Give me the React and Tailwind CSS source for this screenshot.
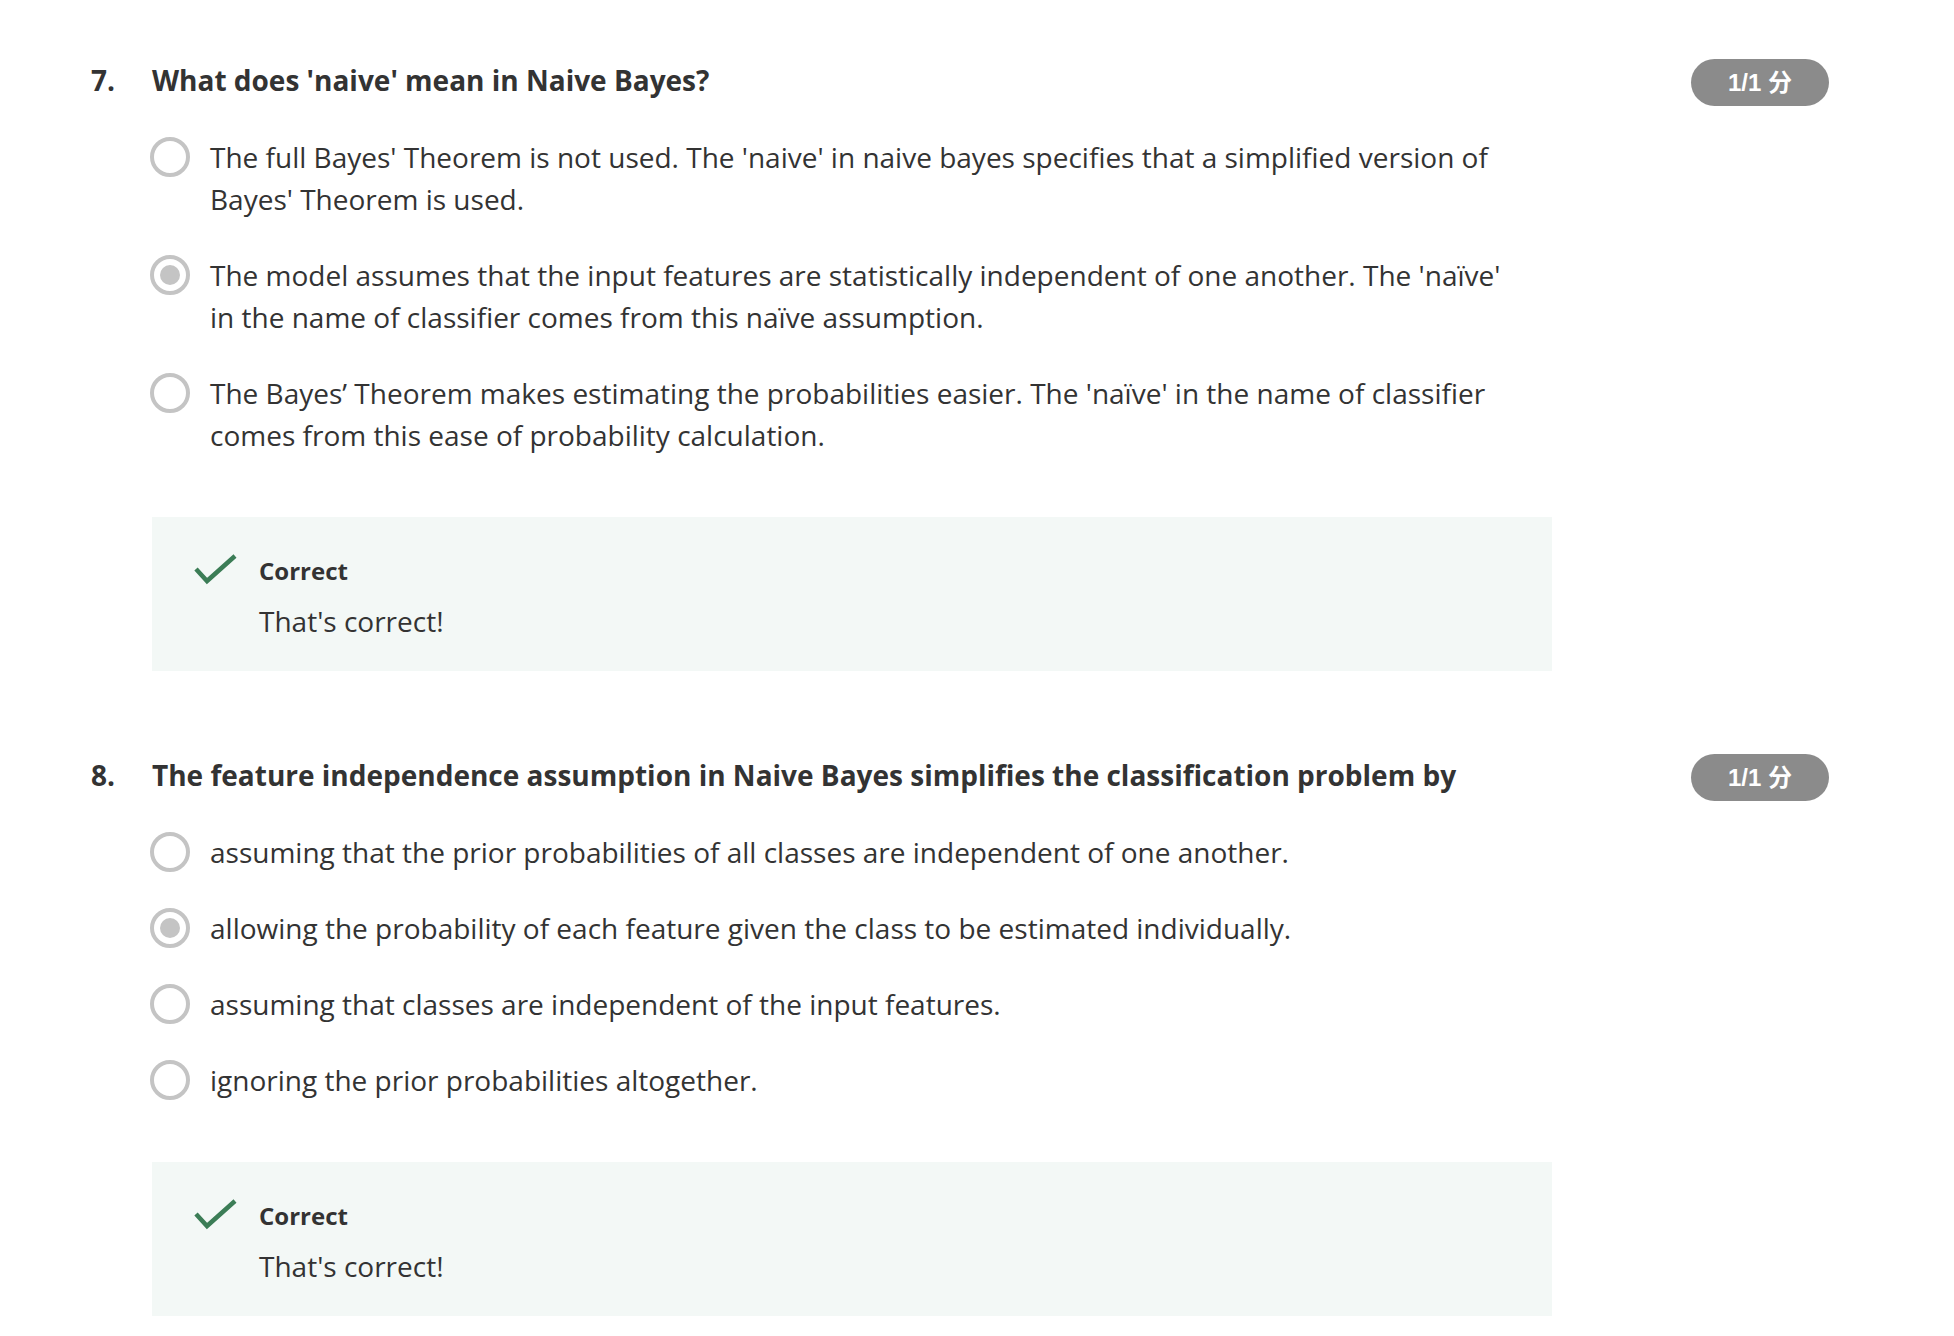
const questions = [
  {
    num: "7.",
    title: "What does 'naive' mean in Naive Bayes?",
    options: [
      "The full Bayes' Theorem is not used. The 'naive' in naive bayes specifies that a simplified version of Bayes' Theorem is used.",
      "The model assumes that the input features are statistically independent of one another. The 'naïve' in the name of classifier comes from this naïve assumption.",
      "The Bayes’ Theorem makes estimating the probabilities easier. The 'naïve' in the name of classifier comes from this ease of probability calculation.",
    ],
    selected: 1,
  },
  {
    num: "8.",
    title: "The feature independence assumption in Naive Bayes simplifies the classification problem by",
    options: [
      "assuming that the prior probabilities of all classes are independent of one another.",
      "allowing the probability of each feature given the class to be estimated individually.",
      "assuming that classes are independent of the input features.",
      "ignoring the prior probabilities altogether.",
    ],
    selected: 1,
  },
];

function Radio({ checked }) {
  return (
    <div className="w-[40px] h-[40px] shrink-0 rounded-full border-[4px] border-[#c4c4c4] flex items-center justify-center">
      {checked && <div className="w-[20px] h-[20px] rounded-full bg-[#c4c4c4]" />}
    </div>
  );
}

function CheckIcon() {
  return (
    <svg width="44" height="32" viewBox="0 0 44 32" fill="none">
      <path d="M2 15 L13 27 L41 2" stroke="#3b7d56" strokeWidth="4.5" />
    </svg>
  );
}

function Question({ q }) {
  return (
    <div className="flex">
      <div className="w-[61px] shrink-0 text-[28px] leading-[42px] font-bold text-[#333]">{q.num}</div>
      <div className="flex-1">
        <div className="flex items-start justify-between">
          <div className="text-[28px] leading-[42px] font-bold text-[#333]">{q.title}</div>
          <div className="w-[138px] h-[47px] shrink-0 rounded-full bg-[#8b8b8b] text-white flex items-center justify-center text-[24px] font-bold font-['Liberation_Sans','Noto_Sans_CJK_SC',sans-serif]">
            1/1 分
          </div>
        </div>
        <div className="mt-[30px] flex flex-col gap-[34px] w-[1380px]">
          {q.options.map((opt, i) => (
            <div key={i} className="flex items-start">
              <div className="pt-[1px] -ml-[2px]">
                <Radio checked={i === q.selected} />
              </div>
              <div className="ml-[20px] text-[28px] leading-[42px] text-[#333] max-w-[1320px]">{opt}</div>
            </div>
          ))}
        </div>
        <div className="mt-[61px] w-[1400px] h-[154px] bg-[#f3f8f6] pl-[42px] pt-[37px] flex items-start">
          <CheckIcon />
          <div className="ml-[21px]">
            <div className="text-[24px] leading-[34px] font-bold text-[#333]">Correct</div>
            <div className="mt-[14px] text-[28px] leading-[38px] text-[#333]">That's correct!</div>
          </div>
        </div>
      </div>
    </div>
  );
}

export default function App() {
  return (
    <div className="min-h-screen bg-white font-['Open_Sans',sans-serif] pl-[91px] pr-[125px] pt-[59px]">
      <div className="flex flex-col gap-[83px]">
        {questions.map((q) => (
          <Question key={q.num} q={q} />
        ))}
      </div>
    </div>
  );
}
